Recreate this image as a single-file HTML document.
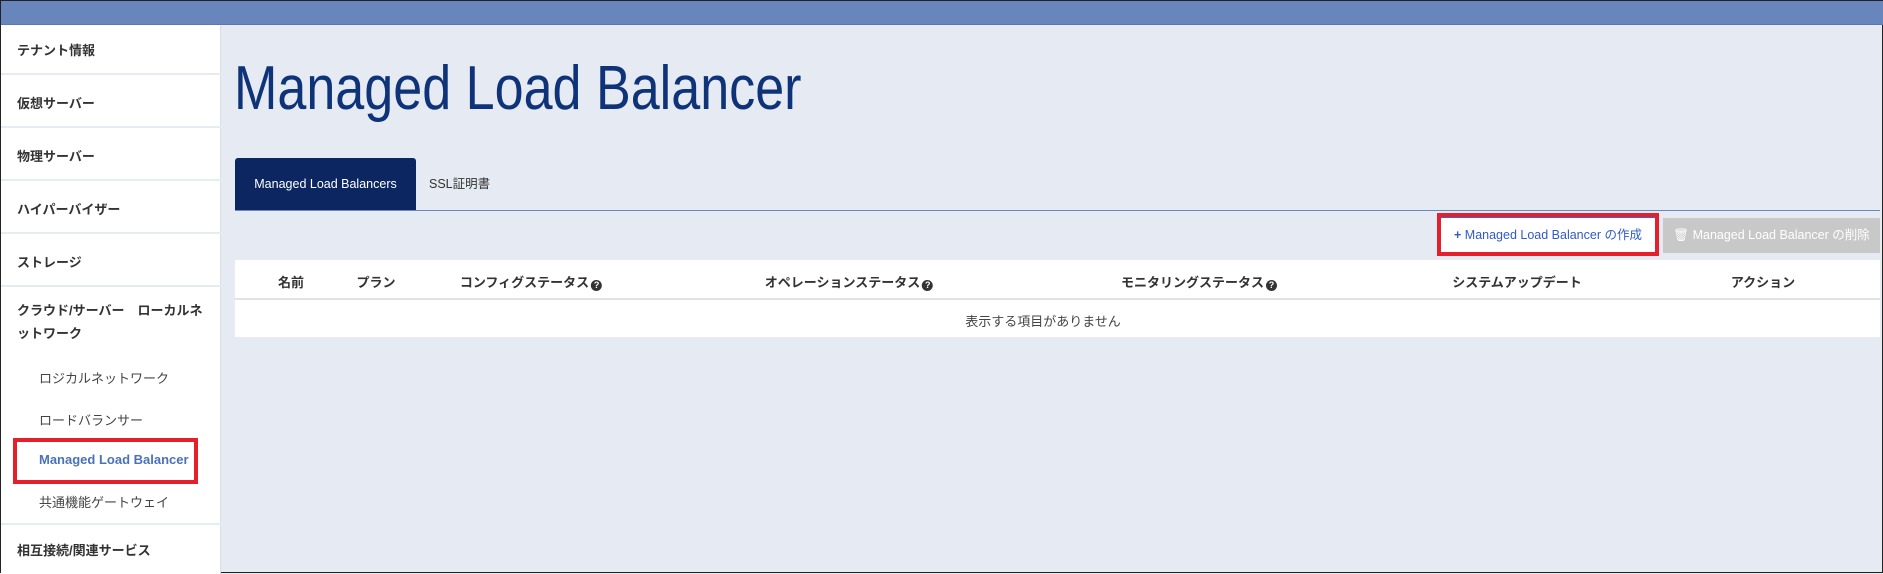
<!DOCTYPE html>
<html><head><meta charset="utf-8"><style>
*{margin:0;padding:0;box-sizing:border-box}
body{width:1883px;height:573px;overflow:hidden;background:#e5eaf3;font-family:"Liberation Sans","Noto Sans CJK JP",sans-serif;position:relative;border:1px solid #222}
.top{position:absolute;left:0;top:0;width:1883px;height:24px;background:#6886bb;border-bottom:1px solid #5a78ad}
.side{position:absolute;left:0;top:24px;width:220px;height:549px;background:#fff;border-right:1px solid #d8dde6}
.it{position:absolute;left:16px;font-size:13px;font-weight:bold;color:#333}
.sub{position:absolute;left:38px;font-size:13px;color:#444}
.sep{position:absolute;left:0;width:220px;height:2px;background:#e8ecf2}
.red{position:absolute;border:4px solid #e4202a}
.abs{position:absolute}
h1{position:absolute;left:233px;top:52px;font-size:62px;font-weight:normal;color:#0f3378;white-space:nowrap;transform-origin:left top;transform:scaleX(0.84)}
.th{position:absolute;top:271px;font-size:13px;font-weight:bold;color:#333;transform:translateX(-50%);white-space:nowrap}
.q{display:inline-block;width:11px;height:11px;border-radius:50%;background:#333;color:#fff;font-size:9px;text-align:center;line-height:11px;vertical-align:-1px;margin-left:2px}
</style></head><body>
<div class="top"></div>
<div class="side">
<div class="it" style="top:15px">テナント情報</div>
<div class="sep" style="top:48px"></div>
<div class="it" style="top:68px">仮想サーバー</div>
<div class="sep" style="top:101px"></div>
<div class="it" style="top:121px">物理サーバー</div>
<div class="sep" style="top:154px"></div>
<div class="it" style="top:174px">ハイパーバイザー</div>
<div class="sep" style="top:207px"></div>
<div class="it" style="top:227px">ストレージ</div>
<div class="sep" style="top:260px"></div>
<div class="it" style="top:274px;line-height:23px;width:190px">クラウド/サーバー　ローカルネットワーク</div>
<div class="sub" style="top:343px">ロジカルネットワーク</div>
<div class="sub" style="top:385px">ロードバランサー</div>
<div class="sub" style="top:427px;color:#4a72b8;font-weight:bold">Managed Load Balancer</div>
<div class="sub" style="top:467px">共通機能ゲートウェイ</div>
<div class="sep" style="top:498px"></div>
<div class="it" style="top:515px">相互接続/関連サービス</div>
</div>
<div class="red" style="left:12px;top:437px;width:185px;height:46px"></div>
<h1>Managed Load Balancer</h1>
<div class="abs" style="left:234px;top:157px;width:181px;height:52px;background:#0b2660;border-radius:3px 3px 0 0;color:#fff;font-size:12.5px;text-align:center;line-height:52px">Managed Load Balancers</div>
<div class="abs" style="left:428px;top:157px;height:52px;line-height:52px;font-size:12.5px;color:#333">SSL証明書</div>
<div class="abs" style="left:234px;top:209px;width:1645px;height:1px;background:#6a88c0"></div>
<div class="red" style="left:1436px;top:212px;width:222px;height:43px;background:#fff"></div>
<div class="abs" style="left:1440px;top:216px;width:214px;height:35px;border-top:1px solid #3b63c8;line-height:34px;font-size:12.5px;color:#2f5ac8;text-align:center"><b>+</b> Managed Load Balancer の作成</div>
<div class="abs" style="left:1662px;top:217px;width:217px;height:35px;background:#c8c8c8;color:#fff;font-size:12.5px;line-height:35px;text-align:center">🗑 Managed Load Balancer の削除</div>
<div class="abs" style="left:234px;top:259px;width:1645px;height:77px;background:#fff"></div>
<div class="abs" style="left:234px;top:297px;width:1645px;height:2px;background:#e2e2e2"></div>
<div class="th" style="left:290px">名前</div>
<div class="th" style="left:375px">プラン</div>
<div class="th" style="left:530px">コンフィグステータス<span class="q">?</span></div>
<div class="th" style="left:848px">オペレーションステータス<span class="q">?</span></div>
<div class="th" style="left:1198px">モニタリングステータス<span class="q">?</span></div>
<div class="th" style="left:1516px">システムアップデート</div>
<div class="th" style="left:1762px">アクション</div>
<div class="abs" style="left:1042px;top:310px;transform:translateX(-50%);font-size:13px;color:#444;white-space:nowrap">表示する項目がありません</div>
</body></html>
